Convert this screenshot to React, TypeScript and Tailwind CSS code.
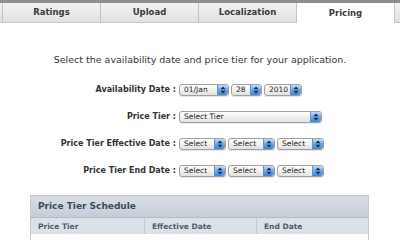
import React from "react";

const Arrow = () => (
  <div className="flex h-full w-[11px] items-center justify-center rounded-r-[3px] border-l border-[#6b8fc0] bg-gradient-to-b from-[#c4dcf7] via-[#6aa6ea] to-[#3d86dc]">
    <svg width="6" height="8" viewBox="0 0 6 8">
      <path d="M3 0.5 L5.5 3.2 L0.5 3.2 Z" fill="#1a2a40" />
      <path d="M3 7.5 L5.5 4.8 L0.5 4.8 Z" fill="#1a2a40" />
    </svg>
  </div>
);

const Sel = ({ text, cls }: { text: string; cls: string }) => (
  <div
    className={`flex h-[12px] items-center overflow-hidden rounded-[3px] border border-[#a0a0a0] bg-gradient-to-b from-[#ffffff] to-[#e2e2e2] shadow-[0_1px_0_#e8e8e8] ${cls}`}
  >
    <span className="flex-1 pl-[4px] text-[7.5px] leading-none text-[#222]">{text}</span>
    <Arrow />
  </div>
);

const Row = ({ label, children }: { label: string; children: React.ReactNode }) => (
  <div className="flex h-[27px] items-center">
    <div className="w-[177px] pr-[1px] text-right text-[8px] font-bold text-[#333]">{label}</div>
    <div className="ml-[2px] flex items-center gap-[2px]">{children}</div>
  </div>
);

export default function App() {
  const tabs = ["Ratings", "Upload", "Localization", "Pricing"];
  return (
    <div
      className="h-[240px] w-[400px] overflow-hidden bg-white"
      style={{ fontFamily: '"DejaVu Sans", "Liberation Sans", sans-serif' }}
    >
      <div className="flex h-[23px] border-t-[3px] border-[#8e8e8e] bg-gradient-to-b from-[#f2f2f2] to-[#e0e0e0]">
        <div className="w-[2px] border-b border-[#c8c8c8]" />
        {tabs.map((t, i) => (
          <div
            key={t}
            className={`flex w-[98px] items-center justify-center border-l border-[#c4c4c4] text-[8.5px] font-bold text-[#3a3a3a] ${
              i === 3 ? "bg-white" : "border-b border-b-[#c8c8c8]"
            }`}
          >
            {t}
          </div>
        ))}
        <div className="flex-1 border-b border-l border-[#c8c8c8]" />
      </div>

      <div className="mt-[30px] text-center text-[9.5px] text-[#333]">
        Select the availability date and price tier for your application.
      </div>

      <div className="mt-[9px] flex flex-col">
        <Row label="Availability Date :">
          <Sel text="01/Jan" cls="w-[50px]" />
          <Sel text="28" cls="w-[31px]" />
          <Sel text="2010" cls="w-[38px]" />
        </Row>
        <Row label="Price Tier :">
          <Sel text="Select Tier" cls="w-[143px]" />
        </Row>
        <Row label="Price Tier Effective Date :">
          <Sel text="Select" cls="w-[47px]" />
          <Sel text="Select" cls="w-[47px]" />
          <Sel text="Select" cls="w-[47px]" />
        </Row>
        <Row label="Price Tier End Date :">
          <Sel text="Select" cls="w-[47px]" />
          <Sel text="Select" cls="w-[47px]" />
          <Sel text="Select" cls="w-[47px]" />
        </Row>
      </div>

      <div className="mx-[30px] mt-[11px] w-[339px] border border-[#c3c9d1]">
        <div className="flex h-[21px] items-center bg-gradient-to-b from-[#d9dee5] to-[#c5cdd8] pl-[7px] text-[9px] font-bold text-[#3b4a5c]">
          Price Tier Schedule
        </div>
        <div className="flex h-[17px] border-t border-[#b5bdc8] bg-[#dce1e7] text-[7.5px] font-bold text-[#4e5b6b]">
          <div className="flex w-[113px] items-center pl-[7px]">Price Tier</div>
          <div className="flex w-[112px] items-center border-l border-[#c1c8d1] pl-[7px]">Effective Date</div>
          <div className="flex flex-1 items-center border-l border-[#c1c8d1] pl-[7px]">End Date</div>
        </div>
        <div className="flex h-[17px] bg-white pt-[5px] text-[7.5px] text-[#555]">
          <div className="w-[113px] pl-[7px] text-[#3a6fb5]">Tier 1</div>
          <div className="w-[112px] pl-[7px]">Existing</div>
          <div className="flex-1 pl-[7px]">None</div>
        </div>
      </div>
    </div>
  );
}
